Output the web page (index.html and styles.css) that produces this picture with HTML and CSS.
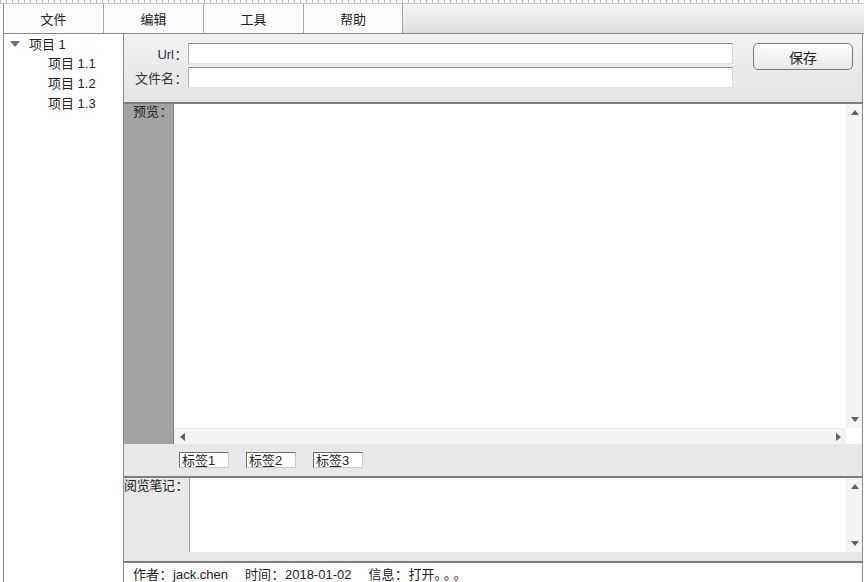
FILE: index.html
```html
<!DOCTYPE html>
<html lang="zh-CN">
<head>
    <meta charset="UTF-8">
    <title>阅览器</title>
    <link rel="stylesheet" href="styles.css">
</head>
<body>
    <div class="ruler"></div>
    <div class="window">
        <div class="menubar">
            <div class="menu-item">文件</div>
            <div class="menu-item">编辑</div>
            <div class="menu-item">工具</div>
            <div class="menu-item">帮助</div>
            <div class="menu-rest"></div>
        </div>
        <div class="main">
            <div class="tree">
                <div class="tree-node"><span class="arrow"></span>项目 1</div>
                <div class="tree-child">项目 1.1</div>
                <div class="tree-child">项目 1.2</div>
                <div class="tree-child">项目 1.3</div>
            </div>
            <div class="content">
                <div class="form">
                    <div class="fields">
                        <div class="field">
                            <label>Url<span class="colon">：</span></label>
                            <div class="input"></div>
                        </div>
                        <div class="field">
                            <label>文件名<span class="colon">：</span></label>
                            <div class="input"></div>
                        </div>
                    </div>
                    <button class="save">保存</button>
                </div>
                <div class="preview">
                    <div class="preview-label">预览<span class="colon">：</span></div>
                    <div class="view">
                        <div class="view-row">
                            <div class="view-body"></div>
                            <div class="vscroll">
                                <span class="up"></span>
                                <span class="down"></span>
                            </div>
                        </div>
                        <div class="hscroll-row">
                            <div class="hscroll">
                                <span class="left"></span>
                                <span class="right"></span>
                            </div>
                            <div class="corner"></div>
                        </div>
                    </div>
                </div>
                <div class="tabs">
                    <div class="tag">标签1</div>
                    <div class="tag">标签2</div>
                    <div class="tag">标签3</div>
                </div>
                <div class="notes">
                    <div class="notes-label">阅览笔记<span class="colon">：</span></div>
                    <div class="notes-box">
                        <div class="notes-body"></div>
                        <div class="vscroll">
                            <span class="up"></span>
                            <span class="down"></span>
                        </div>
                    </div>
                </div>
                <div class="status">
                    <span>作者<span class="colon">：</span>jack.chen</span>
                    <span>时间<span class="colon">：</span>2018-01-02</span>
                    <span>信息<span class="colon">：</span>打开<span class="dots">。。。</span></span>
                </div>
            </div>
        </div>
    </div>
</body>
</html>
```

FILE: styles.css
```css
body {
    margin: 0;
    width: 864px;
    height: 582px;
    overflow: hidden;
    background: #fff;
    font-family: "Liberation Sans", "Noto Sans CJK SC", sans-serif;
    font-size: 13px;
    color: #222;
}
.colon {
    display: inline-block;
    width: 14px;
    text-align: center;
}
.dots {
    letter-spacing: 3px;
}
.ruler {
    height: 4px;
    background:
        repeating-linear-gradient(to right, #b8b8b8 0 1px, transparent 1px 6px) top / 100% 3px no-repeat,
        #fafafa;
    border-bottom: 1px solid #c8c8c8;
    box-sizing: border-box;
}
.window {
    margin-left: 3px;
    width: 860px;
    height: 578px;
    border-left: 1px solid #8a8a8a;
    display: flex;
    flex-direction: column;
}
.menubar {
    display: flex;
    flex-shrink: 0;
    height: 30px;
    border-bottom: 1px solid #8a8a8a;
    box-sizing: border-box;
}
.menu-item {
    width: 100px;
    display: flex;
    align-items: center;
    justify-content: center;
    background: #fcfcfc;
    border-right: 1px solid #a8a8a8;
    box-sizing: border-box;
}
.menu-item:nth-child(4) {
    width: 99px;
}
.menu-rest {
    flex: 1;
    background: linear-gradient(#f6f6f6, #dedede);
}
.main {
    flex: 1;
    display: flex;
    min-height: 0;
}
.tree {
    width: 119px;
    margin-top: -1px;
}
.tree-node {
    display: flex;
    align-items: center;
    height: 21px;
    padding-left: 6px;
}
.arrow {
    width: 0;
    height: 0;
    border-left: 5px solid transparent;
    border-right: 5px solid transparent;
    border-top: 6px solid #707070;
    margin-right: 9px;
}
.tree-child {
    height: 20px;
    line-height: 20px;
    padding-left: 44px;
}
.content {
    width: 740px;
    display: flex;
    flex-direction: column;
    border-left: 1px solid #8a8a8a;
    border-right: 1px solid #8a8a8a;
    box-sizing: border-box;
}
.form {
    height: 70px;
    flex-shrink: 0;
    display: flex;
    align-items: flex-start;
    padding-top: 9px;
    box-sizing: border-box;
    background: linear-gradient(#f2f2f2, #e4e4e4);
    border-bottom: 2px solid #7e7e7e;
}
.fields {
    display: flex;
    flex-direction: column;
    gap: 3px;
}
.field {
    display: flex;
    align-items: center;
}
.field label {
    width: 64px;
    text-align: right;
    color: #333;
}
.input {
    width: 545px;
    height: 21px;
    background: #fff;
    border-top: 1px solid #8c8c8c;
    border-left: 1px solid #b4b4b4;
    border-right: 1px solid #d8d8d8;
    border-bottom: 1px solid #e4e4e4;
    box-sizing: border-box;
}
.save {
    margin-left: 20px;
    width: 100px;
    height: 27px;
    font: inherit;
    font-size: 14px;
    color: #222;
    border: 1px solid #7a7a7a;
    border-radius: 5px;
    background: linear-gradient(#fdfdfd, #e9e9e9);
}
.preview {
    height: 340px;
    flex-shrink: 0;
    display: flex;
}
.preview-label {
    width: 50px;
    background: #a3a3a3;
    border-right: 1px solid #7e7e7e;
    padding-left: 9px;
    line-height: 16px;
    box-sizing: border-box;
    color: #222;
    white-space: nowrap;
}
.view {
    flex: 1;
    display: flex;
    flex-direction: column;
}
.view-row {
    flex: 1;
    display: flex;
}
.view-body {
    flex: 1;
    background: #fff;
}
.vscroll {
    width: 16px;
    background: #f4f4f4;
    border-left: 1px solid #ebebeb;
    box-sizing: border-box;
    display: flex;
    flex-direction: column;
    justify-content: space-between;
    align-items: center;
    padding: 6px 0;
}
.up {
    border-left: 4px solid transparent;
    border-right: 4px solid transparent;
    border-bottom: 5px solid #606060;
}
.down {
    border-left: 4px solid transparent;
    border-right: 4px solid transparent;
    border-top: 5px solid #606060;
}
.hscroll-row {
    height: 16px;
    display: flex;
}
.hscroll {
    flex: 1;
    background: #f4f4f4;
    border-top: 1px solid #ebebeb;
    display: flex;
    align-items: center;
    justify-content: space-between;
    padding: 0 5px 0 6px;
}
.left {
    border-top: 4px solid transparent;
    border-bottom: 4px solid transparent;
    border-right: 5px solid #606060;
}
.right {
    border-top: 4px solid transparent;
    border-bottom: 4px solid transparent;
    border-left: 5px solid #606060;
}
.corner {
    width: 16px;
    background: #fff;
}
.tabs {
    height: 34px;
    flex-shrink: 0;
    display: flex;
    align-items: flex-start;
    padding: 8px 0 0 55px;
    gap: 17px;
    box-sizing: border-box;
    background: #e8e8e8;
    border-bottom: 2px solid #7e7e7e;
}
.tag {
    width: 50px;
    height: 16px;
    line-height: 15px;
    padding-left: 2px;
    box-sizing: border-box;
    background: #fff;
    border-top: 1px solid #6e6e6e;
    border-left: 1px solid #6e6e6e;
    border-right: 1px solid #c8c8c8;
    border-bottom: 1px solid #c8c8c8;
}
.notes {
    height: 85px;
    flex-shrink: 0;
    display: flex;
    align-items: flex-start;
    background: #e8e8e8;
    border-bottom: 2px solid #7e7e7e;
    box-sizing: border-box;
    padding-bottom: 9px;
}
.notes-label {
    width: 65px;
    line-height: 16px;
    white-space: nowrap;
    letter-spacing: -0.3px;
}
.notes-box {
    flex: 1;
    align-self: stretch;
    display: flex;
    border-left: 1px solid #9a9a9a;
}
.notes-body {
    flex: 1;
    background: #fff;
}
.status {
    flex: 1;
    min-height: 0;
    display: flex;
    gap: 17px;
    padding: 4px 0 0 9px;
    line-height: 15px;
    background: #fff;
}
```
